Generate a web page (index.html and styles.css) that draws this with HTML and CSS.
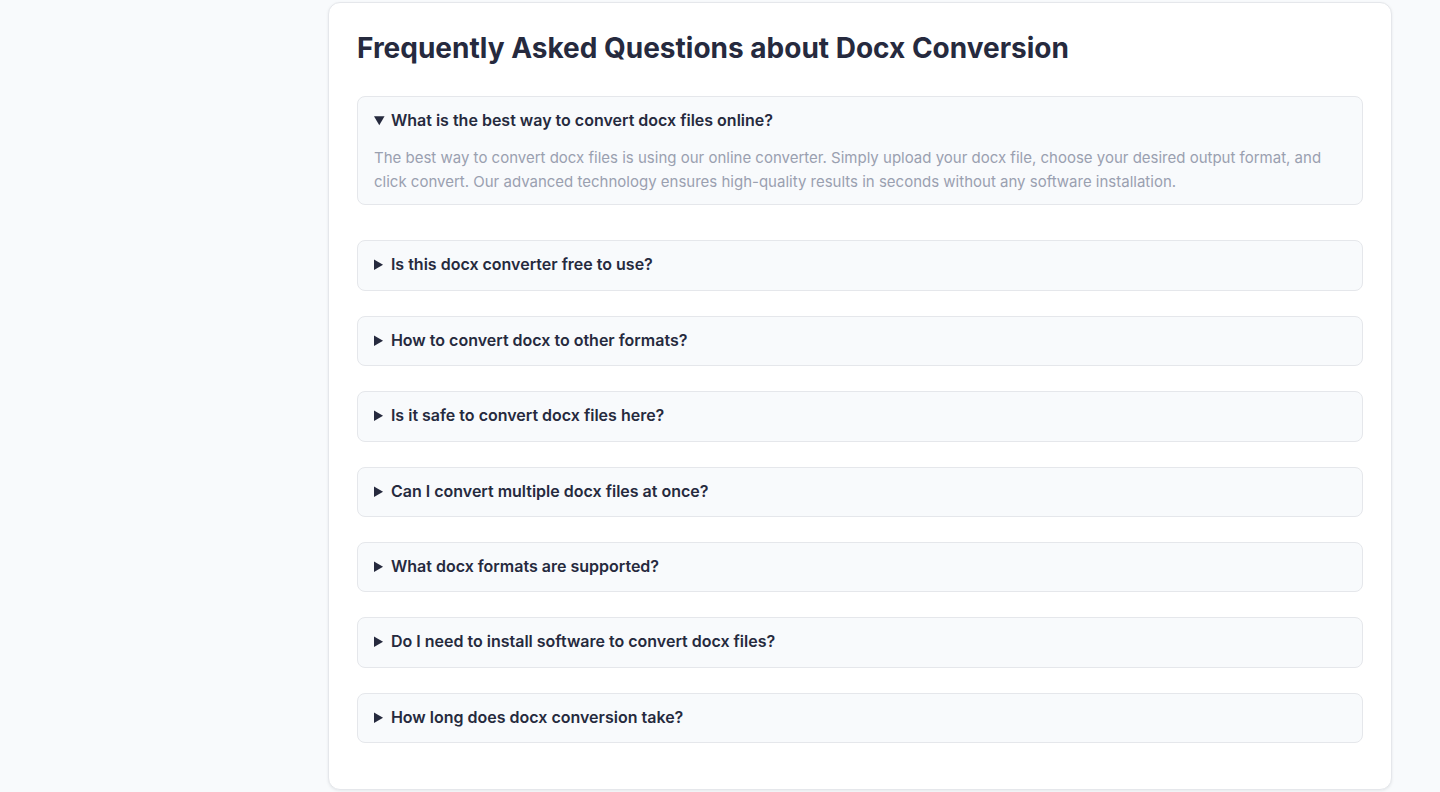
FILE: index.html
```html
<!DOCTYPE html>
<html lang="en">
<head>
<meta charset="utf-8">
<title>FAQ - Docx Conversion</title>
<link rel="stylesheet" href="styles.css">
</head>
<body>
<div class="page">
  <aside class="side"></aside>
  <main class="card">
    <h2 class="title">Frequently Asked Questions about Docx Conversion</h2>
    <div class="faq-list">
      <details class="faq-item" open>
        <summary>What is the best way to convert docx files online?</summary>
        <p>The best way to convert docx files is using our online converter. Simply upload your docx file, choose your desired output format, and click convert. Our advanced technology ensures high-quality results in seconds without any software installation.</p>
      </details>
      <details class="faq-item">
        <summary>Is this docx converter free to use?</summary>
        <p>Yes, our docx converter is completely free to use.</p>
      </details>
      <details class="faq-item">
        <summary>How to convert docx to other formats?</summary>
        <p>Upload your file, pick a format and click convert.</p>
      </details>
      <details class="faq-item">
        <summary>Is it safe to convert docx files here?</summary>
        <p>Yes, files are processed securely.</p>
      </details>
      <details class="faq-item">
        <summary>Can I convert multiple docx files at once?</summary>
        <p>Yes, batch conversion is supported.</p>
      </details>
      <details class="faq-item">
        <summary>What docx formats are supported?</summary>
        <p>Many popular output formats are supported.</p>
      </details>
      <details class="faq-item">
        <summary>Do I need to install software to convert docx files?</summary>
        <p>No, everything runs in your browser.</p>
      </details>
      <details class="faq-item">
        <summary>How long does docx conversion take?</summary>
        <p>Most conversions finish in seconds.</p>
      </details>
    </div>
  </main>
</div>
</body>
</html>
```
FILE: styles.css
```css
* { box-sizing: border-box; }
html, body { margin: 0; padding: 0; }
body {
  background: #f8fafc;
  font-family: Inter, "Noto Sans", sans-serif;
  color: #262a3e;
  height: 792px;
  overflow: hidden;
}
.page {
  display: flex;
  padding-top: 2px;
}
.side {
  width: 328px;
  flex: none;
}
.card {
  width: 1064px;
  flex: none;
  background: #ffffff;
  border: 1px solid #e5e7eb;
  border-radius: 12px;
  box-shadow: 0 1px 3px rgba(15, 23, 42, 0.08);
  padding: 28px 28px 46px;
}
.title {
  margin: 0 0 31px;
  font-size: 28px;
  line-height: 34px;
  font-weight: 700;
  color: #262a3e;
}
.faq-list {
  display: flex;
  flex-direction: column;
  gap: 25px;
}
.faq-item {
  background: #f8fafc;
  border: 1px solid #e5e7eb;
  border-radius: 8px;
  padding: 13px 16px 15px;
}
.faq-item[open] {
  padding-bottom: 10px;
  margin-bottom: 10px;
}
.faq-item summary {
  font-size: 16px;
  line-height: 20.4px;
  font-weight: 600;
  color: #262a3e;
  cursor: pointer;
}
.faq-item p {
  margin: 16px 0 0;
  font-size: 15px;
  line-height: 24px;
  color: #9aa0b0;
}
```
